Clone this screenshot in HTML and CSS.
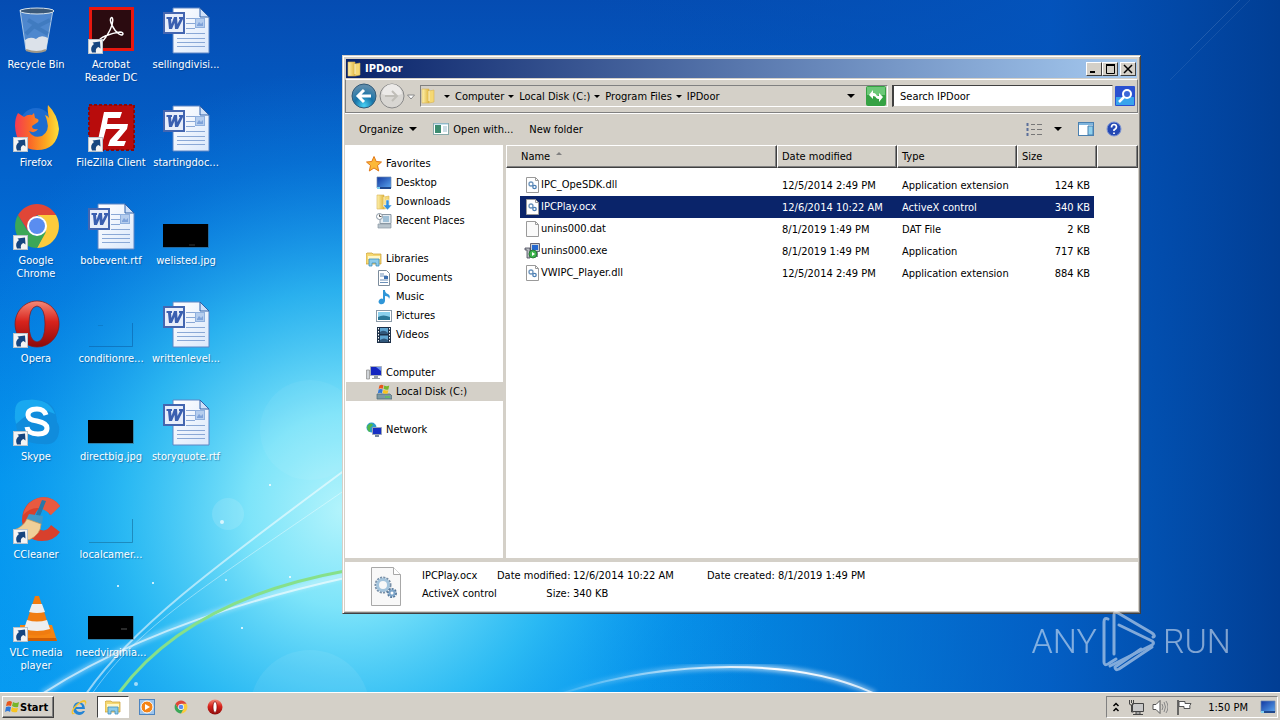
FILE: index.html
```html
<!DOCTYPE html>
<html lang="en">
<head>
    <meta charset="UTF-8">
    <meta name="viewport" content="width=device-width, initial-scale=1.0">
    <title>IPDoor</title>
    <link rel="stylesheet" href="styles.css">
</head>
<body>
    <!-- shared icons -->
    <svg class="defs" width="0" height="0" aria-hidden="true">
        <defs>
            <linearGradient id="gPaper" x1="0" y1="0" x2="1" y2="1">
                <stop offset="0" stop-color="#fff"/><stop offset="1" stop-color="#dbe8fb"/>
            </linearGradient>
            <linearGradient id="gFolder" x1="0" y1="0" x2="1" y2="0">
                <stop offset="0" stop-color="#fff3b0"/><stop offset="1" stop-color="#dfb43c"/>
            </linearGradient>
            <linearGradient id="gRed" x1="0" y1="0" x2="0" y2="1">
                <stop offset="0" stop-color="#f58a78"/><stop offset=".45" stop-color="#d8231c"/><stop offset="1" stop-color="#8c0a0a"/>
            </linearGradient>
            <linearGradient id="gFlame" x1="0" y1="0" x2="1" y2="0">
                <stop offset="0" stop-color="#f43a54"/><stop offset=".35" stop-color="#fa6a28"/><stop offset=".7" stop-color="#fca820"/><stop offset="1" stop-color="#fce03c"/>
            </linearGradient>
            <linearGradient id="gScreen" x1="0" y1="0" x2="1" y2="1">
                <stop offset="0" stop-color="#1237a0"/><stop offset="1" stop-color="#5aa5ee"/>
            </linearGradient>
            <symbol id="shortcut" viewBox="0 0 15 15">
                <rect x=".5" y=".5" width="14" height="14" fill="#f4f4f4" stroke="#b9c3cc"/>
                <path d="M4 13.500Q1.500 8 6 5L4.500 3.500 12 2.500 12.500 9.500 10.500 8Q7 9 8 13.500z" fill="#16457f"/>
            </symbol>
            <symbol id="word" viewBox="0 0 48 48">
                <path d="M11 2h27l9 9v36H11z" fill="url(#gPaper)" stroke="#5f86c4"/>
                <path d="M38 2v9h9z" fill="#cfe0f8" stroke="#2f61a8"/>
                <path d="M24 12.500h9M24 17.500h9M24 22.500h9M24 27.500h19M15 32.500h28M15 36.500h28M15 40.500h28" stroke="#8aa8d6"/>
                <rect x="33.500" y="12.500" width="9" height="9" fill="#b5cdee" stroke="#8fb0de"/>
                <path d="M35 19l2-3 2 2 2-2v4h-6z" fill="#7fa3da"/>
                <rect x="2" y="7" width="20" height="20" fill="#e8eefa" stroke="#4466b0" stroke-width="2"/>
                <path d="M4.500 11h5.500v2H9l.5 5L12 11h3l.5 7 2.500-5h-1v-2h4v2l-5 10h-3l-.5-6-2.500 6H7L6 13H4.500z" fill="#3a5fb0"/>
            </symbol>
            <symbol id="chrome" viewBox="0 0 48 48">
                <path d="M43 13A22 22 0 0 1 24 46L33 28 31 17 24 13z" fill="#fccb3c"/>
                <path d="M5 13A22 22 0 0 0 24 46L33 30 22 34 14 28z" fill="#3ba757"/>
                <path d="M24 13h19a22 22 0 0 0-38 0l10 16z" fill="#e04637"/>
                <circle cx="24" cy="24" r="10" fill="#fff"/>
                <circle cx="24" cy="24" r="8" fill="#5a8df0"/>
            </symbol>
            <symbol id="folder" viewBox="0 0 16 16">
                <path d="M1 1h7v14H1z" fill="url(#gFolder)" stroke="#d8b450" stroke-width=".6"/>
                <path d="M8 3l5-1v12l-5 1z" fill="#f5d873" stroke="#d8b450" stroke-width=".6"/>
                <path d="M8 3v10" stroke="#fff8d0"/>
            </symbol>
            <symbol id="library" viewBox="0 0 16 16">
                <path d="M0 3l1-1h5l1 1h8v10H0z" fill="#f5d873" stroke="#c79c2e" stroke-width=".7"/>
                <path d="M2 5h12v3H2z" fill="#fff7c8"/>
                <path d="M3 15V8h10v7h-3v-3H6v3z" fill="#8ccbea" stroke="#3f90be" stroke-width=".8"/>
            </symbol>
            <symbol id="dll" viewBox="0 0 16 16">
                <path d="M2.500.5h9l3 3v12h-12z" fill="#fff" stroke="#9a9a9a"/>
                <path d="M11.500.5v3h3" fill="none" stroke="#9a9a9a"/>
                <circle cx="7" cy="7" r="2" fill="none" stroke="#6b93bc" stroke-width="1.300"/>
                <circle cx="10.500" cy="10" r="1.700" fill="none" stroke="#4b7fb4" stroke-width="1.300"/>
            </symbol>
            <symbol id="monitor" viewBox="0 0 16 16">
                <path d="M1 2h14v11H1z" fill="url(#gScreen)" stroke="#6c88b0" stroke-width=".7"/>
                <path d="M1 12h14v2H1z" fill="#20488c"/>
                <path d="M1 12h3v2H1z" fill="#7fd0f0"/>
            </symbol>
            <symbol id="flag" viewBox="0 0 16 16">
                <path d="M3 3q3-2 5 0L7 7Q5 6 2 7z" fill="#e8561c"/>
                <path d="M9 3q3 2 6 0l-1 5q-3 1-6-1z" fill="#77b52a"/>
                <path d="M2 8q3-1 5 0l-1 5q-2-2-5 0z" fill="#2f78d8"/>
                <path d="M8 8q2 2 6 1l-1 4q-4 1-6-1z" fill="#f8c420"/>
            </symbol>
        </defs>
    </svg>

    <main class="desktop">
        <svg class="wallpaper" viewBox="0 0 1280 692" preserveAspectRatio="none" aria-hidden="true">
            <defs>
                <linearGradient id="wBase" x1="0" y1="0" x2="0" y2="1">
                    <stop offset="0" stop-color="#054cb2"/><stop offset=".35" stop-color="#026cd6"/><stop offset=".7" stop-color="#0096f0"/><stop offset="1" stop-color="#059cf2"/>
                </linearGradient>
                <linearGradient id="wRight" x1="0" y1="0" x2="1" y2="0">
                    <stop offset=".45" stop-color="#0350b4" stop-opacity="0"/><stop offset=".82" stop-color="#0354bc" stop-opacity=".85"/><stop offset="1" stop-color="#013e94"/>
                </linearGradient>
                <radialGradient id="wGlow" gradientUnits="userSpaceOnUse" cx="345" cy="510" r="440">
                    <stop offset="0" stop-color="#b4f4fc"/><stop offset=".22" stop-color="#84e8fa" stop-opacity=".95"/><stop offset=".5" stop-color="#38c4f4" stop-opacity=".75"/><stop offset=".8" stop-color="#1398ec" stop-opacity=".25"/><stop offset="1" stop-color="#1088e8" stop-opacity="0"/>
                </radialGradient>
                <linearGradient id="wBand" x1="0" y1="0" x2="1" y2="0">
                    <stop offset="0" stop-color="#fff" stop-opacity=".1"/><stop offset=".7" stop-color="#fff" stop-opacity="1"/><stop offset="1" stop-color="#fff" stop-opacity=".7"/>
                </linearGradient>
                <filter id="soft"><feGaussianBlur stdDeviation="2"/></filter>
            </defs>
            <rect width="1280" height="692" fill="url(#wBase)"/>
            <rect width="1280" height="692" fill="url(#wRight)"/>
            <rect width="1280" height="692" fill="url(#wGlow)"/>
            <g fill="none" stroke="#fff">
                <path d="M42 694C110 650 210 608 345 575" stroke-width="6" opacity=".35" filter="url(#soft)"/>
                <path d="M42 694C110 650 210 608 345 578" stroke-width="2" opacity=".6"/>
                <path d="M86 694C130 630 210 570 345 470" stroke-width="2" opacity=".55"/>
                <path d="M92 694C140 625 200 590 345 490" stroke-width="1" opacity=".4"/>
                <path d="M118 694C165 630 240 590 345 571" stroke="#86e08a" stroke-width="3"/>
                <path d="M560 694C670 658 800 658 875 694" stroke="url(#wBand)" stroke-width="6" opacity=".6" filter="url(#soft)"/>
                <path d="M560 694C670 658 800 658 875 694" stroke="url(#wBand)" stroke-width="2"/>
                <path d="M1170 80L1250 0" stroke-width="1" opacity=".08"/>
                <path d="M1190 50L1240 0" stroke-width="1" opacity=".12"/>
            </g>
            <g fill="#fff">
                <circle cx="222" cy="522" r="2" opacity=".7"/><circle cx="226" cy="580" r="1" opacity=".8"/>
                <circle cx="118" cy="586" r="1"/><circle cx="153" cy="583" r="1"/><circle cx="136" cy="684" r="2" opacity=".6"/>
                <circle cx="242" cy="628" r="1"/><circle cx="290" cy="577" r="1"/><circle cx="270" cy="485" r="1"/>
                <circle cx="228" cy="514" r="16" opacity=".12"/><circle cx="310" cy="710" r="60" opacity=".07"/><circle cx="310" cy="430" r="50" opacity=".05"/>
            </g>
        </svg>

        <div class="icons">
            <button class="icon">
                <svg viewBox="0 0 48 48">
                    <path d="M8 4l6 40q10 4 20 0l7-40z" fill="#a9cbea" fill-opacity=".45" stroke="#c8dcec" stroke-opacity=".8"/>
                    <path d="M13 34l1 10q10 4 20 0l2-12q-7-4-12 1-6-3-11 1z" fill="#ececec" fill-opacity=".9"/>
                    <ellipse cx="25" cy="5" rx="17" ry="3" fill="#3a5878" stroke="#d8e4ec"/>
                    <path d="M16 14l10 6 12-6M14 28l8-8 14 8" stroke="#2c68ac" stroke-width="4" opacity=".4" fill="none"/>
                    <path d="M14 44q11 4 20 0" stroke="#a09888" stroke-width="2" fill="none"/>
                </svg>
                <span>Recycle Bin</span>
            </button>
            <button class="icon">
                <svg viewBox="0 0 48 48">
                    <rect x="3.500" y="2.500" width="42" height="41" fill="#2b0b10" stroke="#e8170f" stroke-width="3"/>
                    <path d="M13 35c-3-3 12-8 20-9 5 0 3 5-1 2-6-4-10-14-8-16s3 4-1 12-8 13-10 11z" fill="none" stroke="#fff" stroke-width="1.500"/>
                    <use href="#shortcut" x="1" y="33" width="15" height="15"/>
                </svg>
                <span>Acrobat<br>Reader DC</span>
            </button>
            <button class="icon">
                <svg viewBox="0 0 48 48"><use href="#word" width="48" height="48"/></svg>
                <span>sellingdivisi...</span>
            </button>
            <button class="icon">
                <svg viewBox="0 0 48 48">
                    <circle cx="24" cy="20" r="16" fill="#1c6cd0"/>
                    <path d="M6 9l6 4q4-3 8-2l2-2 1 5q5 1 3 4l-6 4q0 4 6 3-3 5-9 2 4 8 13 5 8-5 5-15-1-4-2-6 3 1 4 3-2-9-1-13Q46 11 47 25 45 46 25 46 4 45 3 22q0-8 3-13z" fill="url(#gFlame)"/>
                    <use href="#shortcut" x="1" y="33" width="15" height="15"/>
                </svg>
                <span>Firefox</span>
            </button>
            <button class="icon">
                <svg viewBox="0 0 48 48">
                    <rect x="2" y="1" width="45" height="45" fill="#b80c0c" stroke="#8e0808" stroke-width="2" stroke-dasharray="3 2"/>
                    <path d="M11 36L17 8h18l-2 6H21l-1 6h9l-1 5h-9l-3 11z" fill="#fff"/>
                    <path d="M27 20h14l-1 5-10 12h9l-2 5H21l2-6 10-11h-7z" fill="#fff"/>
                    <use href="#shortcut" x="1" y="33" width="15" height="15"/>
                </svg>
                <span>FileZilla Client</span>
            </button>
            <button class="icon">
                <svg viewBox="0 0 48 48"><use href="#word" width="48" height="48"/></svg>
                <span>startingdoc...</span>
            </button>
            <button class="icon">
                <svg viewBox="0 0 48 48"><use href="#chrome" x="1" y="0" width="48" height="48"/><use href="#shortcut" x="1" y="33" width="15" height="15"/></svg>
                <span>Google<br>Chrome</span>
            </button>
            <button class="icon">
                <svg viewBox="0 0 48 48"><use href="#word" width="48" height="48"/></svg>
                <span>bobevent.rtf</span>
            </button>
            <button class="icon">
                <svg viewBox="0 0 48 48"><rect x="1" y="22" width="46" height="24" fill="#444" opacity=".4"/><rect x="1" y="22" width="45" height="23"/><path d="M27 43h6" stroke="#333"/></svg>
                <span>welisted.jpg</span>
            </button>
            <button class="icon">
                <svg viewBox="0 0 48 48">
                    <path d="M25 1a22 23 0 1 0 .1 0zM25 6q8 1 8 18t-8 18q-8-1-8-18t8-18z" fill="url(#gRed)" fill-rule="evenodd" stroke="#8c1410" stroke-width=".7"/>
                    <use href="#shortcut" x="1" y="33" width="15" height="15"/>
                </svg>
                <span>Opera</span>
            </button>
            <button class="icon">
                <svg viewBox="0 0 48 48"><path d="M2 46.500h43.500V23" fill="none" stroke="#0c62a8" opacity=".6"/><path d="M11 25.500h5" stroke="#0c70b8" opacity=".5"/></svg>
                <span>conditionre...</span>
            </button>
            <button class="icon">
                <svg viewBox="0 0 48 48"><use href="#word" width="48" height="48"/></svg>
                <span>writtenlevel...</span>
            </button>
            <button class="icon">
                <svg viewBox="0 0 48 48">
                    <path d="M3 14Q3 1 16 2q4-1 8 0 20 0 21 22 3 4 2 10-2 14-16 12Q5 46 4 26 2 20 3 14z" fill="#108cdc"/>
                    <path d="M3 14Q3 1 16 2q4-1 8 0 14 1 19 14Q24 6 4 26 2 20 3 14z" fill="#18a8f0"/>
                    <path d="M34 17q-2-6-9-6-9 0-9 6 0 5 9 6 10 2 10 7 0 6-9 6-10 0-11-7" fill="none" stroke="#fff" stroke-width="5"/>
                    <use href="#shortcut" x="1" y="33" width="15" height="15"/>
                </svg>
                <span>Skype</span>
            </button>
            <button class="icon">
                <svg viewBox="0 0 48 48"><rect x="1" y="22" width="46" height="24" fill="#444" opacity=".4"/><rect x="1" y="22" width="45" height="23"/></svg>
                <span>directbig.jpg</span>
            </button>
            <button class="icon">
                <svg viewBox="0 0 48 48"><use href="#word" width="48" height="48"/></svg>
                <span>storyquote.rtf</span>
            </button>
            <button class="icon">
                <svg viewBox="0 0 48 48">
                    <path d="M48 10Q40-1 26 2 10 7 10 25q2 20 20 20 12 0 18-9l-9-7q-4 7-10 5-8-2-7-12 3-13 13-8l3 5z" fill="#d8402c"/>
                    <path d="M48 10Q40-1 26 2 14 6 11 19q14-14 28 0z" fill="#e85a40"/>
                    <path d="M30 4l4 1-6 15-4-1z" fill="#2878a8"/>
                    <path d="M17 18l14 2-1 9-16-5z" fill="#4098c8"/>
                    <path d="M15 23l14 5q0 10-12 16L2 34q9-3 13-11z" fill="#f0cf98" stroke="#c89858" stroke-width=".7"/>
                    <use href="#shortcut" x="1" y="33" width="15" height="15"/>
                </svg>
                <span>CCleaner</span>
            </button>
            <button class="icon">
                <svg viewBox="0 0 48 48"><path d="M2 46.500h43.500V23" fill="none" stroke="#1a7fb0" opacity=".8"/></svg>
                <span>localcamer...</span>
            </button>
            <i class="empty"></i>
            <button class="icon">
                <svg viewBox="0 0 48 48">
                    <path d="M8 31h32l5 16H8z" fill="#f58412"/>
                    <path d="M8 44h36l1 3H8z" fill="#d05e04"/>
                    <path d="M23 2h4l12 37q-14 5-28 0z" fill="#f07c10"/>
                    <path d="M20 10h10l3 8q-8 2-16 0zM15 26q10 3 20 0l3 9q-13 4-26 0z" fill="#eee"/>
                    <use href="#shortcut" x="1" y="33" width="15" height="15"/>
                </svg>
                <span>VLC media<br>player</span>
            </button>
            <button class="icon">
                <svg viewBox="0 0 48 48"><rect x="1" y="22" width="46" height="24" fill="#444" opacity=".4"/><rect x="1" y="22" width="45" height="23"/><path d="M34 35h6" stroke="#555"/></svg>
                <span>needvirginia...</span>
            </button>
        </div>

        <section class="window">
            <header class="titlebar">
                <svg class="ico" viewBox="0 0 16 16"><use href="#folder"/></svg>
                <h1>IPDoor</h1>
                <button class="tb" aria-label="Minimize"><svg viewBox="0 0 12 10"><path d="M2 8h5" stroke="#000" stroke-width="2"/></svg></button>
                <button class="tb" aria-label="Maximize"><svg viewBox="0 0 12 10"><path d="M2.500 1v8.500h8V1M2 1h9" stroke="#000" fill="none"/><path d="M2 1h9" stroke="#000" stroke-width="2"/></svg></button>
                <button class="tb close" aria-label="Close"><svg viewBox="0 0 12 10"><path d="M2 1l8 8M10 1L2 9" stroke="#000" stroke-width="1.500"/></svg></button>
            </header>

            <nav class="navbar">
                <button class="round" aria-label="Back">
                    <svg viewBox="0 0 26 26">
                        <defs><radialGradient id="gBack" cx=".5" cy=".9" r=".8"><stop offset="0" stop-color="#48d0f4"/><stop offset=".5" stop-color="#1874a8"/><stop offset="1" stop-color="#5c8cac"/></radialGradient></defs>
                        <circle cx="13" cy="13" r="12" fill="url(#gBack)" stroke="#325a78"/>
                        <path d="M20 13H8M13 7l-6 6 6 6" fill="none" stroke="#fff" stroke-width="3"/>
                    </svg>
                </button>
                <button class="round" aria-label="Forward">
                    <svg viewBox="0 0 26 26">
                        <circle cx="13" cy="13" r="12" fill="#d8d6d2" stroke="#888"/>
                        <path d="M3 11a10 10 0 0 1 20 0q-10 4-20 0z" fill="#eceae8"/>
                        <path d="M6 13h12M13 8l5 5-5 5" fill="none" stroke="#c0beb8" stroke-width="2"/>
                    </svg>
                </button>
                <button class="recent" aria-label="Recent pages"><svg viewBox="0 0 8 6"><path d="M.5 1h7L4 5z" fill="#fff" stroke="#888"/></svg></button>
                <div class="address">
                    <svg class="ico" viewBox="0 0 16 16"><use href="#folder"/></svg>
                    <i class="arrow"></i><a href="#">Computer</a>
                    <i class="arrow"></i><a href="#">Local Disk (C:)</a>
                    <i class="arrow"></i><a href="#">Program Files</a>
                    <i class="arrow"></i><a href="#">IPDoor</a>
                    <i class="arrow down"></i>
                    <button class="refresh" aria-label="Refresh">
                        <svg viewBox="0 0 20 20"><rect width="20" height="20" rx="2" fill="#35a244"/><path d="M1 1h18v8H1z" fill="#6cc878"/><path d="M3 9l4-5v3q4 0 4 5-2-2-4-2v3zM17 11l-4 5v-3q-4 0-4-5 2 2 4 2V7z" fill="#fff"/></svg>
                    </button>
                </div>
                <input class="search" type="text" value="Search IPDoor" aria-label="Search IPDoor">
                <button class="go" aria-label="Search">
                    <svg viewBox="0 0 20 20"><rect width="20" height="20" rx="1" fill="#2a50d0"/><path d="M1 11h18v8H1z" fill="#38a4ec"/><circle cx="12" cy="8" r="4" fill="#3c68d8" stroke="#fff" stroke-width="2"/><path d="M9 11l-5 5" stroke="#fff" stroke-width="2.500"/></svg>
                </button>
            </nav>

            <div class="toolbar">
                <button class="organize">Organize <i class="arrow big"></i></button>
                <button class="open"><svg class="ico" viewBox="0 0 16 16"><rect x=".5" y="2.500" width="15" height="11" fill="#fff" stroke="#8aa"/><path d="M2 4h6v8H2z" fill="#3c8c70"/><path d="M10 6h4M10 8h4M10 10h4" stroke="#9bc"/><path d="M1 3h14" stroke="#9cc8e4"/></svg>Open with...</button>
                <button>New folder</button>
                <button class="views" aria-label="Change your view">
                    <svg class="ico" viewBox="0 0 16 16"><path d="M1.500 2v3M1.500 7v3M1.500 12v3" stroke="#5b6f9a" stroke-width="2"/><path d="M5 3.500h4M11 3.500h5M5 8.500h4M11 8.500h5M5 13.500h4M11 13.500h5" stroke="#777"/></svg>
                    <i class="arrow big"></i>
                </button>
                <button aria-label="Preview pane"><svg class="ico" viewBox="0 0 16 16"><rect x=".5" y="1.500" width="15" height="13" fill="#fff" stroke="#4a80b0"/><path d="M1 2h14v2H1z" fill="#7fb4dc"/><path d="M10 5h5v9h-5z" fill="#8fd0ec" stroke="#4a80b0"/></svg></button>
                <button aria-label="Help"><svg class="ico" viewBox="0 0 16 16"><circle cx="8" cy="8" r="7" fill="#2448b4" stroke="#7c94d4"/><path d="M5.500 6.500q0-3 2.500-3t2.500 2.500q0 1.500-2.500 3v1M8 11.500v1.500" fill="none" stroke="#fff" stroke-width="1.700"/></svg></button>
            </div>

            <div class="content">
                <ul class="tree">
                    <li><svg class="ico" viewBox="0 0 16 16"><path d="M8 .5l2.200 5 5.300.5-4 3.500 1.200 5.500L8 12l-4.700 3 1.200-5.500-4-3.500 5.300-.5z" fill="#fcb838" stroke="#e07818"/></svg>Favorites
                        <ul>
                            <li><svg class="ico" viewBox="0 0 16 16"><use href="#monitor"/></svg>Desktop</li>
                            <li><svg class="ico" viewBox="0 0 16 16"><use href="#folder"/><path d="M10 6h3v5h3l-4.500 5L7 11h3z" fill="#2f8fe0" stroke="#fff" stroke-width=".5"/></svg>Downloads</li>
                            <li><svg class="ico" viewBox="0 0 16 16"><path d="M4 1.500h11v9H4z" fill="#e4ecf2" stroke="#8a98a4"/><path d="M7 4h6M7 6h6M7 8h6" stroke="#5a94bc"/><path d="M2 11h13v4H2z" fill="#b8c4cc" stroke="#8a98a4" stroke-width=".7"/><circle cx="3.500" cy="3.500" r="3" fill="#fff" stroke="#8a98a4"/><path d="M3.500 1.500v2h2" stroke="#555" fill="none"/></svg>Recent Places</li>
                        </ul>
                    </li>
                    <li><svg class="ico" viewBox="0 0 16 16"><use href="#library"/></svg>Libraries
                        <ul>
                            <li><svg class="ico" viewBox="0 0 16 16"><path d="M2.500.5h8l3 3v12h-11z" fill="#fff" stroke="#7c8c9c"/><path d="M4 4h4M4 6h7M4 10h8M4 12.500h8" stroke="#6c90b8"/><path d="M8 6h4v3H8z" fill="#3c70b0"/></svg>Documents</li>
                            <li><svg class="ico" viewBox="0 0 16 16"><path d="M7 1h2q0 3 3 4 3 2 1 5 0-3-4-3v5q-1 4-5 3-3-2 0-5 2-1 3 0z" fill="#2f96d8"/></svg>Music</li>
                            <li><svg class="ico" viewBox="0 0 16 16"><rect x=".5" y="2.500" width="15" height="11" fill="#fff" stroke="#8a9aa8"/><path d="M2 4h12v8H2z" fill="#8cd0ec"/><path d="M2 9q5-3 12 0v3H2z" fill="#2c7898"/></svg>Pictures</li>
                            <li><svg class="ico" viewBox="0 0 16 16"><path d="M1 0h14v16H1z" fill="#1d3048"/><path d="M4 1h8v6H4zM4 8.500h8V15H4z" fill="#5fa4d0"/><path d="M4 5q4-3 8 1v1H4zM4 13q4-3 8 0v2H4z" fill="#30587c"/><path d="M2.500 1v14M13.500 1v14" stroke="#fff" stroke-dasharray="1.500 1.500"/></svg>Videos</li>
                        </ul>
                    </li>
                    <li><svg class="ico" viewBox="0 0 16 16"><path d="M4.500 1.500h11v9h-11z" fill="#1426c0" stroke="#a8b0bc"/><path d="M10 2h5v4z" fill="#6890f0"/><path d="M8 11h4v2h2v1H6v-1h2z" fill="#98a0a8"/><path d="M.5 5h3v9h-3z" fill="#d0d4d8" stroke="#888" stroke-width=".7"/></svg>Computer
                        <ul>
                            <li class="current"><svg class="ico" viewBox="0 0 16 16"><path d="M1 10h13l2 2v3H1z" fill="#7c98a4" stroke="#4c6874" stroke-width=".7"/><path d="M9 13h5" stroke="#4cd838"/><use href="#flag" x="1" y="-1" width="13" height="13"/></svg>Local Disk (C:)</li>
                        </ul>
                    </li>
                    <li><svg class="ico" viewBox="0 0 16 16"><circle cx="5.500" cy="5.500" r="5" fill="#2c9ccc"/><path d="M2 3q4-3 5 0l-3 3q1 3-1 4Q0 6 2 3z" fill="#50b848"/><path d="M6.500 5.500h9v7h-9z" fill="#1830c4" stroke="#98a4b8"/><path d="M9 13h4v2H9z" fill="#7888a0"/></svg>Network</li>
                </ul>

                <div class="files">
                    <table>
                        <colgroup><col class="c-name"><col class="c-date"><col class="c-type"><col class="c-size"><col></colgroup>
                        <thead>
                            <tr><th>Name <i class="sort"></i></th><th>Date modified</th><th>Type</th><th>Size</th><th></th></tr>
                        </thead>
                        <tbody>
                            <tr><td><svg class="ico" viewBox="0 0 16 16"><use href="#dll"/></svg>IPC_OpeSDK.dll</td><td>12/5/2014 2:49 PM</td><td>Application extension</td><td>124 KB</td></tr>
                            <tr class="selected"><td><svg class="ico" viewBox="0 0 16 16"><use href="#dll"/></svg>IPCPlay.ocx</td><td>12/6/2014 10:22 AM</td><td>ActiveX control</td><td>340 KB</td></tr>
                            <tr><td><svg class="ico" viewBox="0 0 16 16"><path d="M2.500.5h9l3 3v12h-12z" fill="#fafafa" stroke="#9a9a9a"/><path d="M11.500.5v3h3" fill="none" stroke="#9a9a9a"/></svg>unins000.dat</td><td>8/1/2019 1:49 PM</td><td>DAT File</td><td>2 KB</td></tr>
                            <tr><td><svg class="ico" viewBox="0 0 16 16"><path d="M6.500.5h9v8h-9z" fill="#c8d0d8" stroke="#667"/><path d="M8 2h6v5H8z" fill="#2468d0"/><path d="M1 5h5v10H3V7H1z" fill="#b8bcc0" stroke="#445" stroke-width=".8"/><path d="M6 9h8v5H6z" fill="#889"/><circle cx="9" cy="11" r="4" fill="#3cb44c" stroke="#1c6c2c" stroke-width=".8"/><path d="M8 9l3 2-3 2z" fill="#fff"/></svg>unins000.exe</td><td>8/1/2019 1:49 PM</td><td>Application</td><td>717 KB</td></tr>
                            <tr><td><svg class="ico" viewBox="0 0 16 16"><use href="#dll"/></svg>VWIPC_Player.dll</td><td>12/5/2014 2:49 PM</td><td>Application extension</td><td>884 KB</td></tr>
                        </tbody>
                    </table>
                </div>
            </div>

            <footer class="details">
                <svg class="preview" viewBox="0 0 32 40">
                    <path d="M1.500.5h22l7 7v31h-29z" fill="#f8f8f8" stroke="#a8a8a8"/>
                    <path d="M23.500.5v7h7" fill="#fff" stroke="#a8a8a8"/>
                    <circle cx="13" cy="18" r="7" fill="none" stroke="#7890a8" stroke-width="3" stroke-dasharray="2 1"/>
                    <circle cx="13" cy="18" r="5.500" fill="none" stroke="#a4c4dc" stroke-width="3"/>
                    <circle cx="22" cy="26" r="4" fill="none" stroke="#54789c" stroke-width="2" stroke-dasharray="2 1"/>
                    <circle cx="22" cy="26" r="2.500" fill="#fff" stroke="#7ca4c8" stroke-width="2"/>
                </svg>
                <div class="info">
                    <span class="name">IPCPlay.ocx</span><span class="key">Date modified:</span><span>12/6/2014 10:22 AM</span><span>Date created: 8/1/2019 1:49 PM</span>
                    <span>ActiveX control</span><span class="key">Size:</span><span>340 KB</span>
                </div>
            </footer>
        </section>

        <div class="watermark">
            <span>ANY</span>
            <svg viewBox="0 0 56 62" aria-hidden="true">
                <g fill="none" stroke="#fff" stroke-width="3" stroke-linecap="round" stroke-linejoin="round">
                    <path d="M6 9q-4-2-4 3v40q0 4 4 2l8-5"/>
                    <path d="M12 44V5q0-4 4-2l34 20q4 3 1 4"/>
                    <path d="M17 15l33 16q3 2 0 4L8 56"/>
                    <path d="M13 57q0 4 4 2l33-22M13 57l26-18"/>
                </g>
            </svg>
            <span>RUN</span>
        </div>
    </main>

    <footer class="taskbar">
        <button class="start"><svg viewBox="0 0 16 16"><use href="#flag"/></svg>Start</button>
        <div class="quick">
            <button aria-label="Internet Explorer"><svg class="ico" viewBox="0 0 16 16"><path d="M14 10H5q1 3 4 3 2 0 3-1h2q-2 4-6 4-6-1-6-7 1-6 6-6 6 1 6 7zM5 8h6q0-3-3-3T5 8z" fill="#2484d4"/><path d="M1 15Q-1 11 6 5t9-3q1 2-1 5 1-4-1-4-3 0-7 4T2 13q0 2 3 1-3 2-4 1z" fill="#f4c430"/></svg></button>
            <button class="active" aria-label="Windows Explorer"><svg class="ico" viewBox="0 0 16 16"><use href="#library"/></svg></button>
            <button aria-label="Media Player"><svg class="ico" viewBox="0 0 16 16"><rect x=".5" y=".5" width="15" height="15" fill="#9cc4ec" stroke="#4c84c0"/><circle cx="8" cy="8" r="6" fill="#f48418" stroke="#fff"/><path d="M6 5l5 3-5 3z" fill="#fff"/></svg></button>
            <button aria-label="Chrome"><svg class="ico" viewBox="0 0 16 16"><use href="#chrome" x="1" y="1" width="14" height="14"/></svg></button>
            <button aria-label="Opera"><svg class="ico" viewBox="0 0 16 16"><circle cx="8" cy="8" r="7.500" fill="url(#gRed)"/><ellipse cx="8" cy="8" rx="2" ry="5.500" fill="#fff" stroke="#7c0808" stroke-width=".7"/></svg></button>
        </div>
        <div class="tray">
            <button aria-label="Show hidden icons"><svg class="chev" viewBox="0 0 8 12"><path d="M1.500 5L4 2.500 6.500 5M1.500 10L4 7.500 6.500 10" fill="none" stroke="#000" stroke-width="1.500"/></svg></button>
            <svg class="ico" viewBox="0 0 16 16"><path d="M4.500 4.500h11v8h-11z" fill="#c8c8c8" stroke="#444"/><path d="M8 13h4v2H8zM5 15.500h10" stroke="#444" fill="#fff"/><path d="M1.500 1v4q0 1 2 1t2-1V1M3.500 6v7h2M3.500 1v3" fill="none" stroke="#444"/></svg>
            <svg class="ico speaker" viewBox="0 0 16 16"><path d="M1 5.500h3l4-4v13l-4-4H1z" fill="#fff" stroke="#555"/><path d="M10 5q2 3 0 6M12 3q3 5 0 10M14 2q4 6 0 12" fill="none" stroke="#888"/></svg>
            <svg class="ico" viewBox="0 0 16 16"><path d="M2 1v15" stroke="#444" stroke-width="1.500"/><path d="M3 2.500h6v2h6q-2 2-1 5H8v-2H3z" fill="#fff" stroke="#555"/></svg>
            <time>1:50 PM</time>
            <svg class="ico" viewBox="0 0 16 16"><use href="#monitor"/></svg>
        </div>
    </footer>
</body>
</html>
```

FILE: styles.css
```css
* {
    box-sizing: border-box;
}

body {
    margin: 0;
    height: 100vh;
    display: flex;
    flex-direction: column;
    overflow: hidden;
    font-family: "DejaVu Sans Condensed", "Noto Sans", sans-serif;
    font-size: 11px;
    line-height: 13px;
    color: #000;
}

button {
    font: inherit;
    color: inherit;
    background: none;
    border: 0;
    padding: 0;
}

ul {
    list-style: none;
    margin: 0;
    padding: 0;
}

.defs {
    position: absolute;
}

.ico {
    width: 16px;
    height: 16px;
    flex: none;
}

/* desktop */
.desktop {
    flex: 1;
    position: relative;
    min-height: 0;
}

.wallpaper {
    position: absolute;
    width: 100%;
    height: 100%;
}

.icons {
    position: relative;
    display: grid;
    grid-template-columns: 72px 74px 72px;
    grid-auto-rows: 98px;
    column-gap: 2px;
    padding-top: 5px;
}

.icon {
    display: flex;
    flex-direction: column;
    align-items: center;
    gap: 4px;
    padding-top: 1px;
    color: #fff;
    white-space: nowrap;
    text-shadow: 1px 1px 1px rgba(0, 40, 90, 0.4);
}

.icon svg {
    width: 48px;
    height: 48px;
    flex: none;
}

/* explorer window */
.window {
    position: absolute;
    left: 342px;
    top: 55px;
    width: 799px;
    height: 559px;
    display: flex;
    flex-direction: column;
    padding: 2px;
    background: #d4d0c8;
    border: 1px solid #d4d0c8;
    border-right-color: #404040;
    border-bottom-color: #404040;
    box-shadow: inset 1px 1px #fff, inset -1px -1px #808080;
}

.titlebar {
    display: flex;
    align-items: center;
    height: 19px;
    margin: 1px;
    padding: 0 1px;
    background: linear-gradient(to right, #0a246a, #a6caf0);
    color: #fff;
}

.titlebar h1 {
    flex: 1;
    margin: 0 0 0 2px;
    font-size: 11px;
}

.tb {
    width: 16px;
    height: 14px;
    background: #d4d0c8;
    border: 1px solid #fff;
    border-right-color: #404040;
    border-bottom-color: #404040;
    display: flex;
    align-items: center;
    justify-content: center;
}

.tb svg {
    width: 12px;
    height: 10px;
}

.close {
    margin-left: 2px;
}

.navbar {
    display: flex;
    align-items: center;
    height: 34px;
    padding: 0 1px 0 4px;
    border: 1px solid #808080;
    border-top-color: #fff;
    box-shadow: 0 1px #fff;
}

.round {
    width: 28px;
    height: 26px;
}

.round svg {
    width: 26px;
    height: 26px;
}

.recent {
    width: 10px;
}

.recent svg {
    width: 8px;
    height: 6px;
}

.address {
    flex: 1;
    display: flex;
    align-items: center;
    height: 22px;
    margin: 0 4px;
    border: 1px solid #fff;
    border-top-color: #808080;
    border-left-color: #808080;
}

.address a {
    color: #000;
    text-decoration: none;
    margin: 0 4px 0 5px;
}

.address .ico {
    margin-right: 7px;
}

.arrow {
    width: 0;
    height: 0;
    flex: none;
    border: 3px solid transparent;
    border-top-color: #000;
    border-bottom: 0;
}

.big {
    border-width: 4px;
    border-bottom: 0;
}

.down {
    margin: 0 11px 0 auto;
    border-width: 4px;
    border-bottom: 0;
}

.refresh,
.go {
    width: 21px;
    height: 20px;
}

.refresh svg,
.go svg {
    display: block;
    width: 20px;
    height: 20px;
}

.search {
    width: 221px;
    height: 22px;
    margin-right: 2px;
    padding: 0 6px;
    font: inherit;
    background: #fff;
    border: 1px solid #d4d0c8;
    border-top-color: #404040;
    border-left: 2px solid #404040;
}

.toolbar {
    display: flex;
    align-items: center;
    gap: 16px;
    height: 32px;
    padding: 0 16px 0 14px;
}

.toolbar button {
    display: flex;
    align-items: center;
    gap: 4px;
}

.toolbar .organize {
    gap: 6px;
}

.toolbar .views {
    gap: 12px;
    margin-left: auto;
}

.toolbar > :last-child {
    margin-left: -4px;
}

.content {
    flex: 1;
    display: flex;
    gap: 3px;
    min-height: 0;
}

.tree {
    width: 158px;
    padding: 9px 0 0 1px;
    background: #fff;
    line-height: 19px;
}

.tree > li {
    padding-left: 20px;
    margin-bottom: 19px;
}

.tree .ico {
    margin-right: 4px;
    vertical-align: middle;
}

.tree ul {
    margin-left: -20px;
}

.tree ul li {
    height: 19px;
    padding-left: 30px;
}

.current {
    background: #d4d0c8;
}

.files {
    flex: 1;
    background: #fff;
}

table {
    width: 100%;
    table-layout: fixed;
    border-spacing: 0;
}

.c-name {
    width: 271px;
}

.c-date,
.c-type {
    width: 120px;
}

.c-size {
    width: 80px;
}

th {
    height: 23px;
    padding: 0 4px;
    text-align: left;
    font-weight: normal;
    background: #d4d0c8;
    border: 1px solid #fff;
    border-right-color: #404040;
    border-bottom-color: #404040;
    box-shadow: inset -1px -1px #808080;
}

th:first-child {
    padding-left: 14px;
}

.sort {
    display: inline-block;
    margin: 0 0 5px 3px;
    border: 3px solid transparent;
    border-top: 0;
    border-bottom-color: #808080;
}

tbody::before {
    content: "";
    display: block;
    height: 6px;
}

td {
    height: 22px;
    padding: 0 4px;
    background-clip: padding-box;
}

td:first-child {
    border-left: 14px solid transparent;
}

td:nth-child(2),
td:nth-child(3) {
    padding-left: 5px;
}

td:nth-child(4) {
    text-align: right;
    border-right: 3px solid transparent;
}

td .ico {
    margin-right: 1px;
    vertical-align: middle;
}

.selected td {
    background-color: #0a246a;
    color: #fff;
}

.details {
    display: flex;
    align-items: flex-start;
    gap: 20px;
    height: 49px;
    margin-top: 4px;
    padding: 5px 0 0 25px;
    background: #fff;
}

.preview {
    width: 32px;
    height: 40px;
}

.info {
    display: grid;
    grid-template-columns: 72px 73px 131px auto;
    column-gap: 3px;
    row-gap: 5px;
    padding-top: 2px;
    white-space: nowrap;
}

.key {
    text-align: right;
}

.watermark {
    position: absolute;
    right: 49px;
    bottom: 20px;
    display: flex;
    align-items: center;
    gap: 5px;
    font-family: "Liberation Sans Narrow", Roboto, sans-serif;
    font-weight: 300;
    font-size: 34px;
    line-height: 62px;
    color: #fff;
    opacity: 0.5;
}

.watermark svg {
    width: 56px;
    height: 62px;
}

/* taskbar */
.taskbar {
    display: flex;
    align-items: center;
    height: 28px;
    padding: 1px 2px 0;
    background: #d4d0c8;
    border-top: 1px solid #fff;
}

.start {
    display: flex;
    align-items: center;
    width: 52px;
    height: 22px;
    padding-left: 1px;
    font-weight: bold;
    border: 1px solid #fff;
    border-right-color: #404040;
    border-bottom-color: #404040;
    box-shadow: inset -1px -1px #808080;
}

.start svg {
    width: 16px;
    height: 16px;
    flex: none;
}

.quick {
    display: flex;
    gap: 2px;
    margin-left: 9px;
}

.quick button {
    display: flex;
    align-items: center;
    justify-content: center;
    width: 32px;
    height: 22px;
}

.quick .active {
    background: #fff;
    border: 1px solid #fff;
    border-top-color: #404040;
    border-left-color: #404040;
}

.tray {
    display: flex;
    align-items: center;
    gap: 8px;
    height: 22px;
    margin-left: auto;
    padding: 0 1px 0 5px;
    border: 1px solid #fff;
    border-top-color: #808080;
    border-left-color: #808080;
}

.chev {
    display: block;
    width: 8px;
    height: 12px;
}

.tray time {
    margin: 0 4px 0 8px;
}
```
